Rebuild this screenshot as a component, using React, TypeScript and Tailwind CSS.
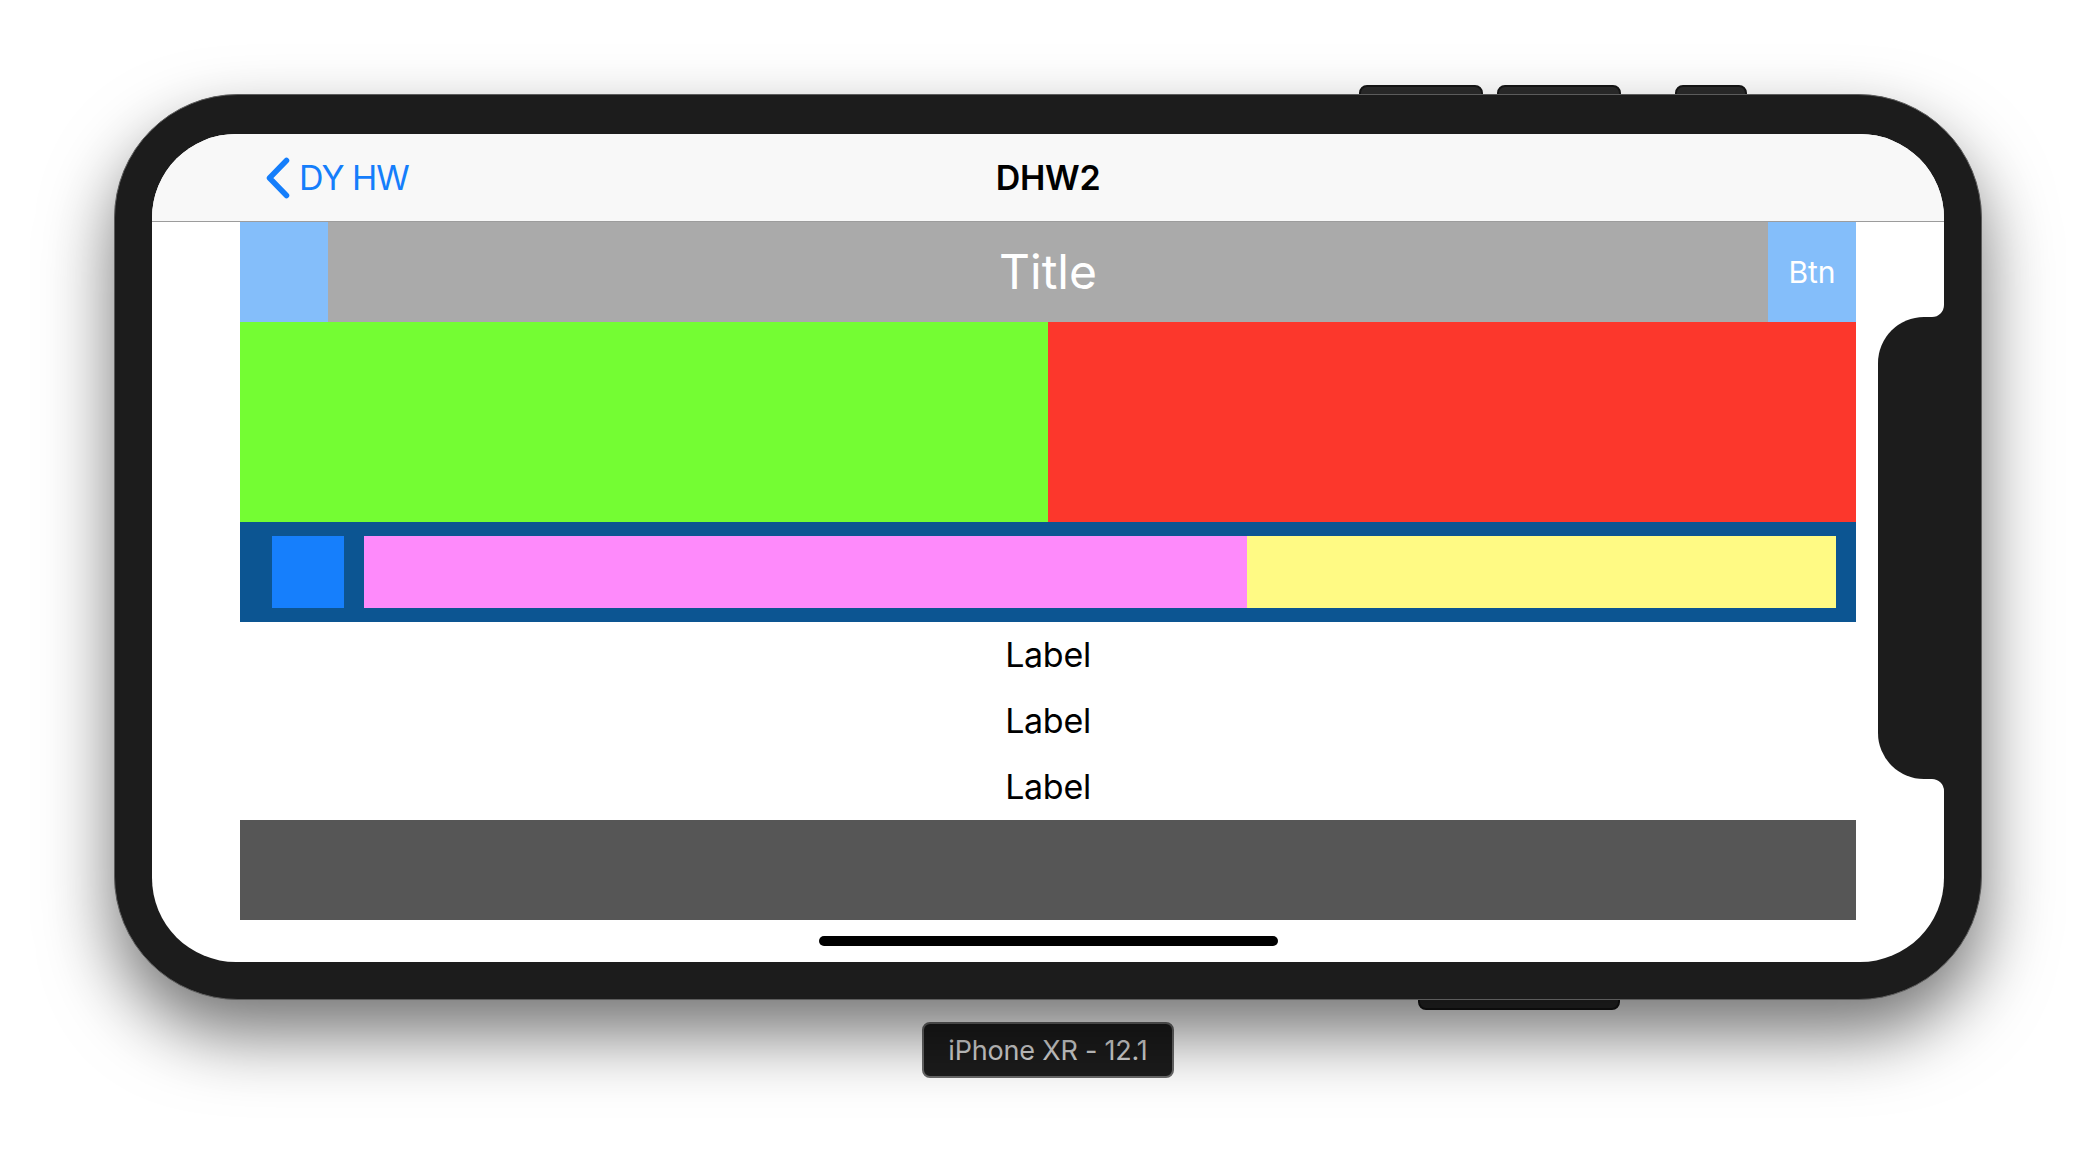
import { } from 'react'

const font = { fontFamily: 'Inter, "Noto Sans", sans-serif' }

function TopButtons() {
  return (
    <>
      <div className="absolute top-[-9px] left-[1245px] w-[124px] h-[14px] rounded-t-[8px] bg-[#2b2b2b] border-2 border-[#161616]" />
      <div className="absolute top-[-9px] left-[1383px] w-[124px] h-[14px] rounded-t-[8px] bg-[#2b2b2b] border-2 border-[#161616]" />
      <div className="absolute top-[-9px] left-[1561px] w-[72px] h-[14px] rounded-t-[8px] bg-[#2b2b2b] border-2 border-[#161616]" />
      <div className="absolute bottom-[-10px] left-[1304px] w-[202px] h-[14px] rounded-b-[8px] bg-[#2b2b2b] border-2 border-[#161616]" />
    </>
  )
}

function NavBar() {
  return (
    <div className="h-[88px] shrink-0 grid grid-cols-[1fr_auto_1fr] items-center bg-[#f8f8f8] border-b border-[#9c9c9c]">
      <div className="flex items-center pl-[114px] gap-[9px] text-[#157efb]">
        <svg width="24" height="42" viewBox="0 0 24 42" fill="none">
          <path d="M20.5 3.5 L3.5 21 L20.5 38.5" stroke="#157efb" strokeWidth="5.5" strokeLinecap="round" strokeLinejoin="round" />
        </svg>
        <span className="text-[34px] leading-none tracking-[-1px]">DY HW</span>
      </div>
      <div className="text-[34px] leading-none font-semibold text-black tracking-[-0.3px]">DHW2</div>
      <div />
    </div>
  )
}

function Content() {
  return (
    <div className="flex-1 flex flex-col px-[88px]">
      <div className="h-[100px] flex">
        <div className="w-[88px] bg-[#84befa]" />
        <div className="flex-1 bg-[#aaaaaa] flex items-center justify-center text-white text-[48px] leading-none">
          Title
        </div>
        <div className="w-[88px] bg-[#84befa] flex items-center justify-center text-white text-[30px] leading-none">
          Btn
        </div>
      </div>
      <div className="h-[200px] flex">
        <div className="flex-1 bg-[#74fd33]" />
        <div className="flex-1 bg-[#fc372c]" />
      </div>
      <div className="h-[100px] flex items-center bg-[#0c5592] pl-[32px] pr-[20px] gap-[20px]">
        <div className="w-[72px] h-[72px] bg-[#167ffc]" />
        <div className="flex-1 h-[72px] flex">
          <div className="flex-[3] bg-[#fe8afb]" />
          <div className="flex-[2] bg-[#fffa84]" />
        </div>
      </div>
      {['Label', 'Label', 'Label'].map((t, i) => (
        <div key={i} className="h-[66px] flex items-center justify-center text-[34px] leading-none text-black tracking-[-0.3px]">
          {t}
        </div>
      ))}
      <div className="h-[100px] bg-[#565656]" />
      <div className="flex-1 flex items-center justify-center">
        <div className="w-[459px] h-[10px] rounded-full bg-black" />
      </div>
    </div>
  )
}

function Notch() {
  return (
    <>
      <div className="absolute right-0 top-[171px] w-[12px] h-[12px] bg-[#1c1c1c]">
        <div className="w-full h-full bg-white rounded-br-[12px]" />
      </div>
      <div className="absolute right-0 top-[183px] w-[66px] h-[462px] rounded-l-[46px] bg-[#1c1c1c]" />
      <div className="absolute right-0 top-[645px] w-[12px] h-[12px] bg-[#1c1c1c]">
        <div className="w-full h-full bg-white rounded-tr-[12px]" />
      </div>
    </>
  )
}

export default function App() {
  return (
    <div className="w-[2096px] h-[1168px] bg-white flex flex-col items-center pt-[94px] overflow-hidden" style={font}>
      <div className="relative w-[1868px] h-[906px]">
        <TopButtons />
        <div className="relative w-full h-full rounded-[124px] bg-[#1c1c1c] border border-[#5c5c5c] pt-[39px] px-[37px] shadow-[0_34px_70px_rgba(0,0,0,0.55)]">
          <div className="relative w-[1792px] h-[828px] rounded-[84px] overflow-hidden bg-white flex flex-col">
            <NavBar />
            <Content />
            <Notch />
          </div>
        </div>
      </div>
      <div className="mt-[22px] h-[56px] px-[24px] flex items-center rounded-[8px] bg-[#1c1c1c] border-2 border-[#6a6a6a] text-[#d6d6d6] text-[27px] leading-none tracking-[-0.2px]">
        iPhone XR - 12.1
      </div>
    </div>
  )
}
